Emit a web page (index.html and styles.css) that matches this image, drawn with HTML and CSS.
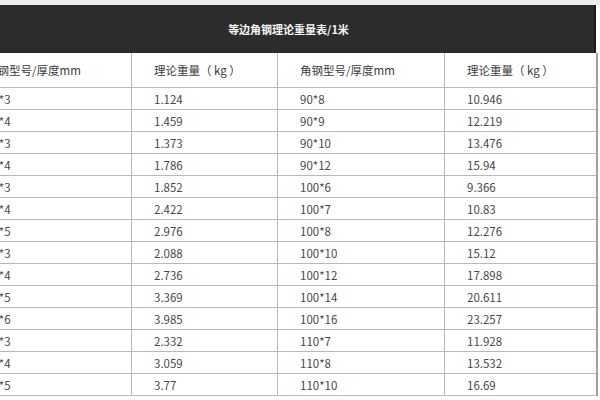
FILE: index.html
```html
<!DOCTYPE html>
<html lang="zh">
<head>
<meta charset="utf-8">
<link rel="stylesheet" href="styles.css">
</head>
<body>
<div class="page">
  <div class="topstrip"></div>
  <div class="sheet">
    <div class="title">等边角钢理论重量表/1米</div>
    <table class="grid">
      <colgroup>
        <col class="c1"><col class="c2"><col class="c3"><col class="c4">
      </colgroup>
      <thead>
        <tr><th>角钢型号/厚度mm</th><th>理论重量（ kg ）</th><th>角钢型号/厚度mm</th><th>理论重量（ kg ）</th></tr>
      </thead>
      <tbody>
        <tr><td>25*3</td><td>1.124</td><td>90*8</td><td>10.946</td></tr>
        <tr><td>25*4</td><td>1.459</td><td>90*9</td><td>12.219</td></tr>
        <tr><td>30*3</td><td>1.373</td><td>90*10</td><td>13.476</td></tr>
        <tr><td>30*4</td><td>1.786</td><td>90*12</td><td>15.94</td></tr>
        <tr><td>40*3</td><td>1.852</td><td>100*6</td><td>9.366</td></tr>
        <tr><td>40*4</td><td>2.422</td><td>100*7</td><td>10.83</td></tr>
        <tr><td>40*5</td><td>2.976</td><td>100*8</td><td>12.276</td></tr>
        <tr><td>45*3</td><td>2.088</td><td>100*10</td><td>15.12</td></tr>
        <tr><td>45*4</td><td>2.736</td><td>100*12</td><td>17.898</td></tr>
        <tr><td>45*5</td><td>3.369</td><td>100*14</td><td>20.611</td></tr>
        <tr><td>45*6</td><td>3.985</td><td>100*16</td><td>23.257</td></tr>
        <tr><td>50*3</td><td>2.332</td><td>110*7</td><td>11.928</td></tr>
        <tr><td>50*4</td><td>3.059</td><td>110*8</td><td>13.532</td></tr>
        <tr><td>50*5</td><td>3.77</td><td>110*10</td><td>16.69</td></tr>
      </tbody>
    </table>
  </div>
</div>
</body>
</html>
```
FILE: styles.css
```css
html, body {
  margin: 0;
  padding: 0;
  background: #ffffff;
}
.page {
  width: 600px;
  height: 400px;
  overflow: hidden;
  font-family: "Noto Sans CJK SC", "Noto Sans", sans-serif;
  color: #484848;
}
.topstrip {
  height: 5px;
  background: #ececec;
}
.sheet {
  margin-left: -37px;
  width: 633px;
}
.title {
  height: 48px;
  background: #2c2c2c;
  color: #f4f4f4;
  font-size: 11px;
  font-weight: bold;
  display: flex;
  align-items: center;
  justify-content: center;
  padding-left: 20px;
  box-sizing: border-box;
  border-right: 2px solid #1c1c1c;
}
.grid {
  border-collapse: collapse;
  table-layout: fixed;
  width: 633px;
  font-size: 11.5px;
}
.c1 { width: 168px; }
.c2 { width: 146px; }
.c3 { width: 167px; }
.c4 { width: 152px; }
.grid th,
.grid td {
  text-align: left;
  font-weight: normal;
  padding: 0 0 0 22px;
  border-left: 1px solid #b9b9b9;
  border-bottom: 1px solid #b9b9b9;
  white-space: nowrap;
  overflow: hidden;
}
.grid th:last-child,
.grid td:last-child {
  border-right: 2px solid #a0a0a0;
}
.grid th {
  height: 34px;
  color: #3c3c3c;
}
.grid td {
  height: 21px;
}
```
